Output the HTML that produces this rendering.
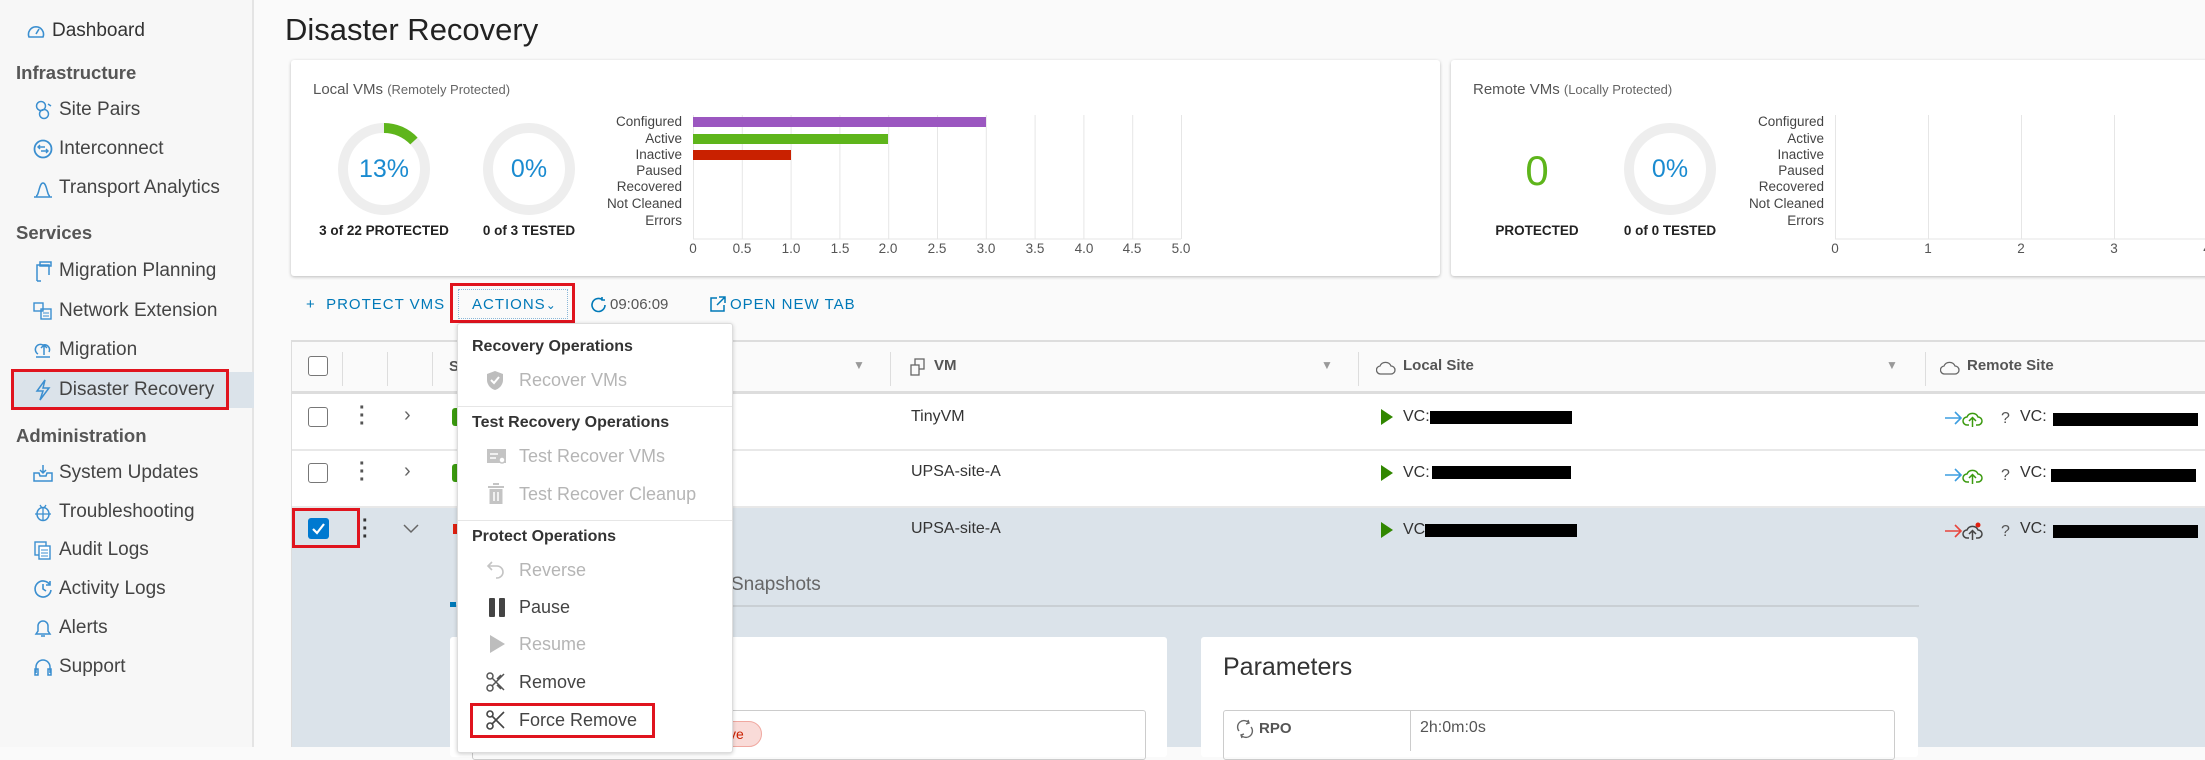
<!DOCTYPE html>
<html><head><meta charset="utf-8">
<style>
*{margin:0;padding:0;box-sizing:border-box}
body{width:2205px;height:747px;overflow:hidden;background:#fafafa;font-family:"Liberation Sans",sans-serif;color:#333;position:relative}
.a{position:absolute;white-space:nowrap}
.side{position:absolute;left:0;top:0;width:254px;height:747px;background:#f7f7f7;border-right:2px solid #e4e4e4}
.si{position:absolute;left:59px;font-size:19px;line-height:22px;color:#444}
.sh{position:absolute;left:16px;font-size:18.5px;font-weight:bold;line-height:22px;color:#565656}
.ic{position:absolute;left:33px}
.card{position:absolute;background:#fff;box-shadow:0 1px 3px rgba(0,0,0,.25);border-radius:3px}
.lbl{position:absolute;font-size:13.5px;color:#444;text-align:right;line-height:16px}
.tk{position:absolute;font-size:13.5px;color:#555;line-height:16px;width:40px;text-align:center;top:241px}
.tb{position:absolute;font-size:15px;letter-spacing:1px;color:#0079b8;line-height:18px;top:296px}
.mh{position:absolute;left:472px;font-size:16px;font-weight:bold;color:#333;line-height:20px}
.mi{position:absolute;left:519px;font-size:18px;line-height:22px}
.dis{color:#b5b5b5}
.dk{color:#444}
.cb{position:absolute;width:20px;height:20px;border:1.5px solid #777;border-radius:3px;background:#fff}
.red{position:absolute;border:3px solid #e0141e}
.rd{position:absolute;background:#000;height:13px}
.cell{position:absolute;font-size:16px;color:#333;line-height:20px}
</style></head><body>

<!-- sidebar -->
<div class="side"></div>
<div class="a" style="left:11px;top:372px;width:243px;height:36px;background:#dbe3ea"></div>
<svg class="ic" style="left:27px;top:23px" width="18" height="17" viewBox="0 0 18 17"><path d="M2 14 A7.5 7.5 0 1 1 16 14 Z" fill="none" stroke="#3b8fd0" stroke-width="1.6"/><path d="M9 11 L12 6" stroke="#3b8fd0" stroke-width="1.6"/></svg>
<div class="si" style="left:52px;top:20px;color:#333">Dashboard</div>
<div class="sh" style="top:62px">Infrastructure</div>
<svg class="ic" style="top:100px" width="20" height="20" viewBox="0 0 20 20"><circle cx="8" cy="6" r="4.5" fill="none" stroke="#3b8fd0" stroke-width="1.5"/><circle cx="11" cy="14" r="4.5" fill="none" stroke="#3b8fd0" stroke-width="1.5"/><path d="M15 4l3 2" stroke="#3b8fd0" stroke-width="1.5"/></svg>
<div class="si" style="top:99px">Site Pairs</div>
<svg class="ic" style="top:139px" width="20" height="20" viewBox="0 0 20 20"><circle cx="10" cy="10" r="8.5" fill="none" stroke="#3b8fd0" stroke-width="1.8"/><path d="M6 8h6M8 12h6M7 6l-2 2 2 2M13 10l2 2-2 2" fill="none" stroke="#3b8fd0" stroke-width="1.4"/></svg>
<div class="si" style="top:138px">Interconnect</div>
<svg class="ic" style="top:179px" width="20" height="20" viewBox="0 0 20 20"><path d="M1 18h18M3 17c3 0 3-13 7-13s4 13 7 13" fill="none" stroke="#3b8fd0" stroke-width="1.5"/></svg>
<div class="si" style="top:177px">Transport Analytics</div>
<div class="sh" style="top:222px">Services</div>
<svg class="ic" style="top:260px" width="20" height="22" viewBox="0 0 20 22"><path d="M4 21V5h12v10M4 21h4M7 2h11v4H7z" fill="none" stroke="#3b8fd0" stroke-width="1.5"/></svg>
<div class="si" style="top:260px">Migration Planning</div>
<svg class="ic" style="top:301px" width="20" height="20" viewBox="0 0 20 20"><rect x="1" y="2" width="9" height="8" fill="none" stroke="#3b8fd0" stroke-width="1.4"/><rect x="8" y="8" width="10" height="10" fill="none" stroke="#3b8fd0" stroke-width="1.4"/><path d="M10 12h6M10 15h6" stroke="#3b8fd0"/></svg>
<div class="si" style="top:300px">Network Extension</div>
<svg class="ic" style="top:340px" width="20" height="20" viewBox="0 0 20 20"><path d="M3 17h14M5 14a5 5 0 0 1 5-9 5 5 0 0 1 6 7M11 5v10M8 8l3-3 3 3" fill="none" stroke="#3b8fd0" stroke-width="1.5"/></svg>
<div class="si" style="top:339px">Migration</div>
<svg class="ic" style="top:379px" width="20" height="22" viewBox="0 0 20 22"><path d="M12 1L4 12h6l-3 9 9-12h-6z" fill="none" stroke="#3b8fd0" stroke-width="1.5"/></svg>
<div class="si" style="top:379px">Disaster Recovery</div>
<div class="red" style="left:11px;top:369px;width:218px;height:41px"></div>
<div class="sh" style="top:425px">Administration</div>
<svg class="ic" style="top:463px" width="20" height="20" viewBox="0 0 20 20"><path d="M1 10h5l1 3h6l1-3h5v8H1zM10 2v8M7 7l3 3 3-3" fill="none" stroke="#3b8fd0" stroke-width="1.5"/></svg>
<div class="si" style="top:462px">System Updates</div>
<svg class="ic" style="top:502px" width="20" height="20" viewBox="0 0 20 20"><ellipse cx="10" cy="12" rx="6" ry="6.5" fill="none" stroke="#3b8fd0" stroke-width="1.5"/><path d="M2 12h16M7 3l2 3M13 3l-2 3M10 6v12" stroke="#3b8fd0" stroke-width="1.3"/></svg>
<div class="si" style="top:501px">Troubleshooting</div>
<svg class="ic" style="top:540px" width="20" height="20" viewBox="0 0 20 20"><rect x="2" y="2" width="11" height="13" fill="none" stroke="#3b8fd0" stroke-width="1.4"/><rect x="6" y="6" width="11" height="13" fill="#fff" stroke="#3b8fd0" stroke-width="1.4"/><path d="M8 10h7M8 13h7M8 16h7" stroke="#3b8fd0"/></svg>
<div class="si" style="top:539px">Audit Logs</div>
<svg class="ic" style="top:579px" width="20" height="20" viewBox="0 0 20 20"><path d="M17 6A8 8 0 1 0 18 11M10 5v5l3 2M17 2v4h-4" fill="none" stroke="#3b8fd0" stroke-width="1.6"/></svg>
<div class="si" style="top:578px">Activity Logs</div>
<svg class="ic" style="top:618px" width="20" height="20" viewBox="0 0 20 20"><path d="M3 16h14l-2-3V8a5 5 0 0 0-10 0v5zM8 18h4" fill="none" stroke="#3b8fd0" stroke-width="1.5"/></svg>
<div class="si" style="top:617px">Alerts</div>
<svg class="ic" style="top:657px" width="20" height="20" viewBox="0 0 20 20"><path d="M3 16v-6a7 7 0 0 1 14 0v6M2 12h3v6H2zM15 12h3v6h-3z" fill="none" stroke="#3b8fd0" stroke-width="1.5"/></svg>
<div class="si" style="top:656px">Support</div>

<!-- title -->
<div class="a" style="left:285px;top:11px;font-size:31px;line-height:38px;color:#222">Disaster Recovery</div>

<!-- card 1 -->
<div class="card" style="left:291px;top:60px;width:1149px;height:216px"></div>
<div class="a" style="left:313px;top:81px;font-size:15px;line-height:18px;color:#555">Local VMs <span style="font-size:13px;color:#666">(Remotely Protected)</span></div>
<svg class="a" style="left:334px;top:119px" width="100" height="100" viewBox="0 0 100 100"><circle cx="50" cy="50" r="41" fill="none" stroke="#eee" stroke-width="10"/><circle cx="50" cy="50" r="41" fill="none" stroke="#5eb51b" stroke-width="10" stroke-dasharray="33.5 300" transform="rotate(-90 50 50)"/></svg>
<div class="a" style="left:334px;top:154px;width:100px;text-align:center;font-size:25px;line-height:30px;color:#1a8bd0">13%</div>
<div class="a" style="left:314px;top:223px;width:140px;text-align:center;font-size:13.5px;font-weight:bold;line-height:16px;color:#222">3 of 22 PROTECTED</div>
<svg class="a" style="left:479px;top:119px" width="100" height="100" viewBox="0 0 100 100"><circle cx="50" cy="50" r="41" fill="none" stroke="#eee" stroke-width="10"/></svg>
<div class="a" style="left:479px;top:154px;width:100px;text-align:center;font-size:25px;line-height:30px;color:#1a8bd0">0%</div>
<div class="a" style="left:469px;top:223px;width:120px;text-align:center;font-size:13.5px;font-weight:bold;line-height:16px;color:#222">0 of 3 TESTED</div>
<!-- chart 1 -->
<svg class="a" style="left:690px;top:112px" width="500" height="130"><g stroke="#e6e6e6" stroke-width="1">
<line x1="3.5" y1="3" x2="3.5" y2="127"/><line x1="52.3" y1="3" x2="52.3" y2="127"/><line x1="101.1" y1="3" x2="101.1" y2="127"/><line x1="149.9" y1="3" x2="149.9" y2="127"/><line x1="198.7" y1="3" x2="198.7" y2="127"/><line x1="247.5" y1="3" x2="247.5" y2="127"/><line x1="296.3" y1="3" x2="296.3" y2="127"/><line x1="345.1" y1="3" x2="345.1" y2="127"/><line x1="393.9" y1="3" x2="393.9" y2="127"/><line x1="442.7" y1="3" x2="442.7" y2="127"/><line x1="491.5" y1="3" x2="491.5" y2="127"/>
<line x1="3" y1="127" x2="491" y2="127"/></g>
<rect x="3" y="5" width="293" height="10" fill="#9b57c0"/><rect x="3" y="22" width="195" height="10" fill="#5eb51b"/><rect x="3" y="38" width="98" height="10" fill="#c92100"/></svg>
<div class="lbl" style="left:582px;width:100px;top:114px">Configured</div>
<div class="lbl" style="left:582px;width:100px;top:131px">Active</div>
<div class="lbl" style="left:582px;width:100px;top:147px">Inactive</div>
<div class="lbl" style="left:582px;width:100px;top:163px">Paused</div>
<div class="lbl" style="left:582px;width:100px;top:179px">Recovered</div>
<div class="lbl" style="left:582px;width:100px;top:196px">Not Cleaned</div>
<div class="lbl" style="left:582px;width:100px;top:213px">Errors</div>
<div class="tk" style="left:673px">0</div>
<div class="tk" style="left:722px">0.5</div>
<div class="tk" style="left:771px">1.0</div>
<div class="tk" style="left:820px">1.5</div>
<div class="tk" style="left:868px">2.0</div>
<div class="tk" style="left:917px">2.5</div>
<div class="tk" style="left:966px">3.0</div>
<div class="tk" style="left:1015px">3.5</div>
<div class="tk" style="left:1064px">4.0</div>
<div class="tk" style="left:1112px">4.5</div>
<div class="tk" style="left:1161px">5.0</div>

<!-- card 2 -->
<div class="card" style="left:1451px;top:60px;width:770px;height:216px"></div>
<div class="a" style="left:1473px;top:81px;font-size:15px;line-height:18px;color:#555">Remote VMs <span style="font-size:13px;color:#666">(Locally Protected)</span></div>
<div class="a" style="left:1497px;top:146px;width:80px;text-align:center;font-size:42px;line-height:50px;color:#5eb51b">0</div>
<div class="a" style="left:1487px;top:223px;width:100px;text-align:center;font-size:13.5px;font-weight:bold;line-height:16px;color:#222">PROTECTED</div>
<svg class="a" style="left:1620px;top:119px" width="100" height="100" viewBox="0 0 100 100"><circle cx="50" cy="50" r="41" fill="none" stroke="#eee" stroke-width="10"/></svg>
<div class="a" style="left:1620px;top:154px;width:100px;text-align:center;font-size:25px;line-height:30px;color:#1a8bd0">0%</div>
<div class="a" style="left:1610px;top:223px;width:120px;text-align:center;font-size:13.5px;font-weight:bold;line-height:16px;color:#222">0 of 0 TESTED</div>
<svg class="a" style="left:1832px;top:112px" width="373" height="130"><g stroke="#e6e6e6"><line x1="3.5" y1="3" x2="3.5" y2="127"/><line x1="96.5" y1="3" x2="96.5" y2="127"/><line x1="189.5" y1="3" x2="189.5" y2="127"/><line x1="282.5" y1="3" x2="282.5" y2="127"/><line x1="3" y1="127" x2="373" y2="127"/></g></svg>
<div class="lbl" style="left:1724px;width:100px;top:114px">Configured</div>
<div class="lbl" style="left:1724px;width:100px;top:131px">Active</div>
<div class="lbl" style="left:1724px;width:100px;top:147px">Inactive</div>
<div class="lbl" style="left:1724px;width:100px;top:163px">Paused</div>
<div class="lbl" style="left:1724px;width:100px;top:179px">Recovered</div>
<div class="lbl" style="left:1724px;width:100px;top:196px">Not Cleaned</div>
<div class="lbl" style="left:1724px;width:100px;top:213px">Errors</div>
<div class="tk" style="left:1815px">0</div><div class="tk" style="left:1908px">1</div><div class="tk" style="left:2001px">2</div><div class="tk" style="left:2094px">3</div><div class="tk" style="left:2187px">4</div>

<!-- toolbar -->
<div class="tb" style="left:306px">+&nbsp; PROTECT VMS</div>
<div class="a" style="left:458px;top:289px;width:110px;height:30px;border:1px dotted #8bb8d8"></div>
<div class="tb" style="left:472px">ACTIONS<span style="font-size:12px">&#8964;</span></div>
<div class="red" style="left:450px;top:283px;width:125px;height:40px"></div>
<svg class="a" style="left:590px;top:296px" width="18" height="18" viewBox="0 0 18 18"><path d="M15 9A6.5 6.5 0 1 1 12 3.5M12 1v3h3" fill="none" stroke="#0079b8" stroke-width="1.6"/></svg>
<div class="a" style="left:610px;top:296px;font-size:15px;line-height:18px;color:#555">09:06:09</div>
<svg class="a" style="left:709px;top:296px" width="17" height="17" viewBox="0 0 17 17"><path d="M8 2H2v13h13V9M10 1h6v6M16 1l-8 8" fill="none" stroke="#0079b8" stroke-width="1.5"/></svg>
<div class="tb" style="left:730px">OPEN NEW TAB</div>

<!-- table -->
<div class="a" style="left:291px;top:340px;width:1914px;height:407px;background:#fff;border-top:2px solid #ddd;border-left:1px solid #ddd"></div>
<div class="a" style="left:292px;top:342px;width:1913px;height:52px;background:#fafafa;border-bottom:3px solid #ddd"></div>
<div class="a" style="left:342px;top:352px;width:1px;height:34px;background:#ddd"></div>
<div class="a" style="left:387px;top:352px;width:1px;height:34px;background:#ddd"></div>
<div class="a" style="left:432px;top:352px;width:1px;height:34px;background:#ddd"></div>
<div class="a" style="left:890px;top:352px;width:1px;height:34px;background:#ddd"></div>
<div class="a" style="left:1358px;top:352px;width:1px;height:34px;background:#ddd"></div>
<div class="a" style="left:1925px;top:352px;width:1px;height:34px;background:#ddd"></div>
<div class="cb" style="left:308px;top:356px"></div>
<div class="a" style="left:449px;top:358px;font-size:15px;font-weight:bold;color:#555">S</div>
<div class="a" style="left:853px;top:358px;font-size:12px;color:#999">&#9660;</div>
<svg class="a" style="left:910px;top:358px" width="16" height="18" viewBox="0 0 16 18"><rect x="5" y="1" width="9" height="10" fill="none" stroke="#666" stroke-width="1.3"/><rect x="1" y="7" width="8" height="10" fill="#fafafa" stroke="#666" stroke-width="1.3"/></svg>
<div class="a" style="left:934px;top:357px;font-size:15px;font-weight:bold;color:#555;line-height:18px">VM</div>
<div class="a" style="left:1321px;top:358px;font-size:12px;color:#999">&#9660;</div>
<svg class="a" style="left:1376px;top:358px" width="20" height="18" viewBox="0 0 20 18"><path d="M5 16h10a4 4 0 0 0 0-8A6 6 0 0 0 4 8a4 4 0 0 0 1 8z" fill="none" stroke="#666" stroke-width="1.3"/></svg>
<div class="a" style="left:1403px;top:357px;font-size:15px;font-weight:bold;color:#555;line-height:18px">Local Site</div>
<div class="a" style="left:1886px;top:358px;font-size:12px;color:#999">&#9660;</div>
<svg class="a" style="left:1940px;top:358px" width="20" height="18" viewBox="0 0 20 18"><path d="M5 16h10a4 4 0 0 0 0-8A6 6 0 0 0 4 8a4 4 0 0 0 1 8z" fill="none" stroke="#666" stroke-width="1.3"/></svg>
<div class="a" style="left:1967px;top:357px;font-size:15px;font-weight:bold;color:#555;line-height:18px">Remote Site</div>

<!-- rows -->
<div class="a" style="left:292px;top:449px;width:1913px;height:2px;background:#e8e8e8"></div>
<div class="a" style="left:292px;top:506px;width:1913px;height:241px;background:#dbe3ea;border-top:2px solid #e8e8e8"></div>

<div class="cb" style="left:308px;top:407px"></div>
<div class="a" style="left:359px;top:404px;font-size:20px;font-weight:bold;color:#555;line-height:8px">&middot;<br>&middot;<br>&middot;</div>
<div class="a" style="left:404px;top:404px;font-size:20px;color:#666">&#8250;</div>
<div class="a" style="left:452px;top:408px;width:5px;height:18px;background:#3b9a0f;border-radius:3px 0 0 3px"></div>
<div class="cell" style="left:911px;top:407px">TinyVM</div>

<div class="cb" style="left:308px;top:463px"></div>
<div class="a" style="left:359px;top:460px;font-size:20px;font-weight:bold;color:#555;line-height:8px">&middot;<br>&middot;<br>&middot;</div>
<div class="a" style="left:404px;top:460px;font-size:20px;color:#666">&#8250;</div>
<div class="a" style="left:452px;top:464px;width:5px;height:18px;background:#3b9a0f;border-radius:3px 0 0 3px"></div>
<div class="cell" style="left:911px;top:462px">UPSA-site-A</div>

<div class="a" style="left:308px;top:518px;width:21px;height:21px;background:#0079d0;border-radius:3px"></div>
<svg class="a" style="left:311px;top:522px" width="15" height="13" viewBox="0 0 15 13"><path d="M2 7l4 4 7-9" fill="none" stroke="#fff" stroke-width="2.2"/></svg>
<div class="red" style="left:292px;top:508px;width:68px;height:40px"></div>
<div class="a" style="left:362px;top:517px;font-size:20px;font-weight:bold;color:#333;line-height:8px">&middot;<br>&middot;<br>&middot;</div>
<svg class="a" style="left:403px;top:524px" width="16" height="10" viewBox="0 0 16 10"><path d="M1 1l7 7 7-7" fill="none" stroke="#666" stroke-width="1.5"/></svg>
<div class="a" style="left:453px;top:524px;width:4px;height:10px;background:#e02010"></div>
<div class="cell" style="left:911px;top:519px">UPSA-site-A</div>

<!-- local site cells -->
<svg class="a" style="left:1381px;top:409px" width="12" height="16"><path d="M0 0L12 8 0 16z" fill="#318700"/></svg>
<div class="cell" style="left:1403px;top:407px">VC:</div><div class="rd" style="left:1430px;top:411px;width:142px"></div>
<svg class="a" style="left:1381px;top:465px" width="12" height="16"><path d="M0 0L12 8 0 16z" fill="#318700"/></svg>
<div class="cell" style="left:1403px;top:463px">VC:</div><div class="rd" style="left:1432px;top:466px;width:139px"></div>
<svg class="a" style="left:1381px;top:522px" width="12" height="16"><path d="M0 0L12 8 0 16z" fill="#318700"/></svg>
<div class="cell" style="left:1403px;top:520px">VC:</div><div class="rd" style="left:1425px;top:524px;width:152px"></div>

<!-- remote site cells -->
<svg class="a" style="left:1944px;top:408px" width="80" height="20" viewBox="0 0 80 20"><path d="M1 10h15M11 4l6 6-6 6" fill="none" stroke="#3d9ee0" stroke-width="1.6"/><path d="M25 17h-2a4 4 0 0 1 0-8 6 6 0 0 1 11 0 4 4 0 0 1 0 8h-2M28.5 19v-9M25 13l3.5-3.5L32 13" fill="none" stroke="#3b9a0f" stroke-width="1.5"/></svg>
<div class="cell" style="left:2001px;top:409px;color:#555">?</div><div class="cell" style="left:2020px;top:407px">VC:</div><div class="rd" style="left:2053px;top:413px;width:145px"></div>
<svg class="a" style="left:1944px;top:465px" width="80" height="20" viewBox="0 0 80 20"><path d="M1 10h15M11 4l6 6-6 6" fill="none" stroke="#3d9ee0" stroke-width="1.6"/><path d="M25 17h-2a4 4 0 0 1 0-8 6 6 0 0 1 11 0 4 4 0 0 1 0 8h-2M28.5 19v-9M25 13l3.5-3.5L32 13" fill="none" stroke="#3b9a0f" stroke-width="1.5"/></svg>
<div class="cell" style="left:2001px;top:466px;color:#555">?</div><div class="cell" style="left:2020px;top:463px">VC:</div><div class="rd" style="left:2051px;top:469px;width:145px"></div>
<svg class="a" style="left:1944px;top:521px" width="80" height="20" viewBox="0 0 80 20"><path d="M1 10h15M11 4l6 6-6 6" fill="none" stroke="#e8453c" stroke-width="1.6"/><path d="M25 17h-2a4 4 0 0 1 0-8 6 6 0 0 1 11 0 4 4 0 0 1 0 8h-2M28.5 19v-9M25 13l3.5-3.5L32 13" fill="none" stroke="#444" stroke-width="1.5"/><circle cx="34" cy="4" r="2.5" fill="#e02010"/></svg>
<div class="cell" style="left:2001px;top:522px;color:#555">?</div><div class="cell" style="left:2020px;top:519px">VC:</div><div class="rd" style="left:2053px;top:525px;width:145px"></div>

<!-- expanded details -->
<div class="a" style="left:731px;top:573px;font-size:19px;color:#666;line-height:24px">Snapshots</div>
<div class="a" style="left:450px;top:605px;width:1469px;height:2px;background:#c9cfd4"></div>
<div class="a" style="left:450px;top:602px;width:6px;height:5px;background:#0079b8"></div>
<div class="a" style="left:450px;top:637px;width:717px;height:120px;background:#fff;border-radius:3px"></div>
<div class="a" style="left:472px;top:710px;width:674px;height:50px;border:1px solid #ccc;border-radius:3px"></div>
<div class="a" style="left:700px;top:721px;width:62px;height:26px;background:#f9dbd8;border:1px solid #f0a8a0;border-radius:13px;color:#c92100;font-size:14px;line-height:24px;padding-left:28px">ve</div>
<div class="a" style="left:1201px;top:637px;width:717px;height:120px;background:#fff;border-radius:3px"></div>
<div class="a" style="left:1223px;top:652px;font-size:25px;color:#333;line-height:30px">Parameters</div>
<div class="a" style="left:1223px;top:710px;width:672px;height:50px;border:1px solid #ccc;border-radius:3px"></div>
<div class="a" style="left:1410px;top:711px;width:1px;height:40px;background:#ccc"></div>
<svg class="a" style="left:1236px;top:719px" width="18" height="20" viewBox="0 0 18 20"><path d="M3 12A6 6 0 0 1 13 4M15 8a6 6 0 0 1-10 8M12 1l1 3-3 1M6 19l-1-3 3-1" fill="none" stroke="#666" stroke-width="1.4"/></svg>
<div class="a" style="left:1259px;top:720px;font-size:15px;font-weight:bold;color:#555">RPO</div>
<div class="a" style="left:1420px;top:719px;font-size:16px;color:#555">2h:0m:0s</div>

<!-- dropdown menu -->
<div class="a" style="left:457px;top:323px;width:276px;height:430px;background:#fff;border:1px solid #ddd;border-radius:3px;box-shadow:0 1px 4px rgba(0,0,0,.2)"></div>
<div class="mh" style="top:337px">Recovery Operations</div>
<svg class="a" style="left:486px;top:370px" width="18" height="21" viewBox="0 0 18 21"><path d="M9 1L1 4v6c0 5 4 9 8 10 4-1 8-5 8-10V4z" fill="#bdbdbd"/><path d="M5 10l3 3 5-6" fill="none" stroke="#fff" stroke-width="2"/></svg>
<div class="mi dis" style="top:369px">Recover VMs</div>
<div class="a" style="left:458px;top:406px;width:274px;height:1px;background:#e6e6e6"></div>
<div class="mh" style="top:413px">Test Recovery Operations</div>
<svg class="a" style="left:486px;top:447px" width="22" height="20" viewBox="0 0 22 20"><rect x="1" y="2" width="19" height="14" fill="#c4c4c4"/><path d="M4 7h8M4 11h6" stroke="#fff" stroke-width="1.5"/><circle cx="16" cy="13" r="3" fill="#fff" stroke="#c4c4c4" stroke-width="1.5"/></svg>
<div class="mi dis" style="top:445px">Test Recover VMs</div>
<svg class="a" style="left:487px;top:483px" width="18" height="22" viewBox="0 0 18 22"><path d="M1 4h16M6 1h6" stroke="#c4c4c4" stroke-width="2"/><rect x="2.5" y="6" width="13" height="15" fill="#c4c4c4"/><path d="M7 9v9M11 9v9" stroke="#fff" stroke-width="1.5"/></svg>
<div class="mi dis" style="top:483px">Test Recover Cleanup</div>
<div class="a" style="left:458px;top:520px;width:274px;height:1px;background:#e6e6e6"></div>
<div class="mh" style="top:527px">Protect Operations</div>
<svg class="a" style="left:486px;top:560px" width="20" height="22" viewBox="0 0 20 22"><path d="M6 2L2 6l4 4M2 6h9a6 6 0 0 1 0 12h-1" fill="none" stroke="#c4c4c4" stroke-width="1.6"/></svg>
<div class="mi dis" style="top:559px">Reverse</div>
<div class="a" style="left:489px;top:598px;width:6px;height:19px;background:#444;border-radius:1px"></div><div class="a" style="left:499px;top:598px;width:6px;height:19px;background:#444;border-radius:1px"></div>
<div class="mi dk" style="top:596px">Pause</div>
<svg class="a" style="left:490px;top:635px" width="15" height="18"><path d="M0 0L15 9 0 18z" fill="#bdbdbd"/></svg>
<div class="mi dis" style="top:633px">Resume</div>
<svg class="a" style="left:486px;top:672px" width="20" height="20" viewBox="0 0 20 20"><circle cx="4" cy="4" r="3" fill="none" stroke="#555" stroke-width="1.5"/><circle cx="4" cy="16" r="3" fill="none" stroke="#555" stroke-width="1.5"/><path d="M6 6l12 12M6 14L18 2M11 7l4-4M11 13l4 4" stroke="#555" stroke-width="1.5"/></svg>
<div class="mi dk" style="top:671px">Remove</div>
<svg class="a" style="left:486px;top:710px" width="20" height="20" viewBox="0 0 20 20"><circle cx="4" cy="4" r="3" fill="none" stroke="#444" stroke-width="1.6"/><circle cx="4" cy="16" r="3" fill="none" stroke="#444" stroke-width="1.6"/><path d="M6 6l12 12M6 14L18 2" stroke="#444" stroke-width="1.6"/></svg>
<div class="mi dk" style="top:709px">Force Remove</div>
<div class="red" style="left:470px;top:703px;width:185px;height:35px"></div>

</body></html>
